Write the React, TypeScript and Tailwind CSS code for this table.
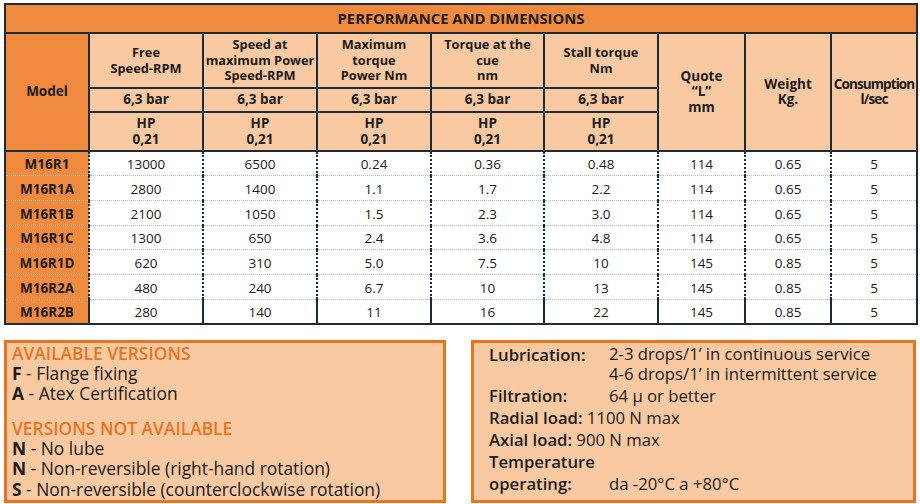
const ROWS = [
  ["M16R1", "13000", "6500", "0.24", "0.36", "0.48", "114", "0.65", "5"],
  ["M16R1A", "2800", "1400", "1.1", "1.7", "2.2", "114", "0.65", "5"],
  ["M16R1B", "2100", "1050", "1.5", "2.3", "3.0", "114", "0.65", "5"],
  ["M16R1C", "1300", "650", "2.4", "3.6", "4.8", "114", "0.65", "5"],
  ["M16R1D", "620", "310", "5.0", "7.5", "10", "145", "0.85", "5"],
  ["M16R2A", "480", "240", "6.7", "10", "13", "145", "0.85", "5"],
  ["M16R2B", "280", "140", "11", "16", "22", "145", "0.85", "5"],
];

const HEAD = [
  ["Free", "Speed-RPM"],
  ["Speed at", "maximum Power", "Speed-RPM"],
  ["Maximum", "torque", "Power Nm"],
  ["Torque at the", "cue", "nm"],
  ["Stall torque", "Nm"],
];

const font = { fontFamily: '"Open Sans", "Noto Sans", sans-serif' };

export default function App() {
  return (
    <div className="min-h-[504px] w-[920px] bg-white pl-1 pt-[3px] text-[#1b1b1b]" style={font}>
      <table className="w-[912px] table-fixed border-collapse border-2 border-[#1c2b38] text-center">
        <colgroup>
          <col className="w-[84px]" />
          <col className="w-[114px]" />
          <col className="w-[114px]" />
          <col className="w-[114px]" />
          <col className="w-[113px]" />
          <col className="w-[114px]" />
          <col className="w-[87px]" />
          <col className="w-[86px]" />
          <col className="w-[86px]" />
        </colgroup>
        <thead className="text-[13.5px] font-bold leading-[15.5px]">
          <tr className="h-[29px]">
            <th colSpan={9} className="border-2 border-[#1c2b38] bg-[#ef8a3f] text-[14.8px]">
              PERFORMANCE AND DIMENSIONS
            </th>
          </tr>
          <tr className="h-[55px]">
            <th rowSpan={3} className="border-2 border-[#1c2b38] bg-[#ef8a3f]">
              Model
            </th>
            {HEAD.map((lines, i) => (
              <th key={i} className="border-2 border-[#1c2b38] bg-[#f9c9a1] text-[12.8px]">
                {lines.map((l) => (
                  <div key={l} className="whitespace-nowrap">{l}</div>
                ))}
              </th>
            ))}
            <th rowSpan={3} className="border-2 border-[#1c2b38] bg-[#f9c9a1]">
              <div>Quote</div>
              <div>“L”</div>
              <div>mm</div>
            </th>
            <th rowSpan={3} className="border-2 border-[#1c2b38] bg-[#f9c9a1]">
              <div>Weight</div>
              <div>Kg.</div>
            </th>
            <th rowSpan={3} className="border-2 border-[#1c2b38] bg-[#f9c9a1] tracking-[-0.9px]">
              <div className="whitespace-nowrap">Consumption</div>
              <div>l/sec</div>
            </th>
          </tr>
          <tr className="h-[24px]">
            {HEAD.map((_, i) => (
              <th key={i} className="border-2 border-[#1c2b38] bg-[#f9c9a1]">
                6,3 bar
              </th>
            ))}
          </tr>
          <tr className="h-[39px]">
            {HEAD.map((_, i) => (
              <th key={i} className="border-2 border-[#1c2b38] bg-[#f9c9a1]">
                <div>HP</div>
                <div>0,21</div>
              </th>
            ))}
          </tr>
        </thead>
        <tbody className="text-[13.5px]">
          {ROWS.map((r, ri) => (
            <tr key={r[0]} className="h-[24.7px]">
              {r.map((c, ci) => (
                <td
                  key={ci}
                  className={`border-x-2 border-x-[#1c2b38] pt-[2px] ${
                    ri < ROWS.length - 1 ? "border-b border-b-[#b9b9b9] border-dotted" : ""
                  } ${ci === 0 ? "bg-[#ef8a3f] font-bold" : "bg-white"}`}
                >
                  {c}
                </td>
              ))}
            </tr>
          ))}
        </tbody>
      </table>

      <div className="mt-[15px] flex gap-[25px]">
        <div className="h-[163px] w-[442px] border-[3px] border-[#e8741f] bg-[#f9c9a2] px-[5px] text-[17.4px] leading-[20.3px]">
          <div className="font-semibold text-[#e8741f]">AVAILABLE VERSIONS</div>
          <div>
            <b>F</b> - Flange fixing
          </div>
          <div>
            <b>A</b> - Atex Certification
          </div>
          <div className="mt-[14px] font-semibold text-[#e8741f]">VERSIONS NOT AVAILABLE</div>
          <div>
            <b>N</b> - No lube
          </div>
          <div>
            <b>N</b> - Non-reversible (right-hand rotation)
          </div>
          <div>
            <b>S</b> - Non-reversible (counterclockwise rotation)
          </div>
        </div>

        <div className="h-[163px] w-[445px] border-[3px] border-[#e8741f] bg-[#f9c9a2] pl-[15px] pt-px text-[16.7px] leading-[22px]">
          <div className="flex">
            <span className="w-[120px] shrink-0 font-semibold">Lubrication:</span>
            <span className="leading-[20.5px]">
              <div>2-3 drops/1’ in continuous service</div>
              <div>4-6 drops/1’ in intermittent service</div>
            </span>
          </div>
          <div className="flex">
            <span className="w-[120px] shrink-0 font-semibold">Filtration:</span>
            <span>64 µ or better</span>
          </div>
          <div>
            <span className="font-semibold">Radial load:</span> 1100 N max
          </div>
          <div>
            <span className="font-semibold">Axial load:</span> 900 N max
          </div>
          <div className="font-semibold">Temperature</div>
          <div className="flex">
            <span className="w-[120px] shrink-0 font-semibold">operating:</span>
            <span>da -20°C a +80°C</span>
          </div>
        </div>
      </div>
    </div>
  );
}
